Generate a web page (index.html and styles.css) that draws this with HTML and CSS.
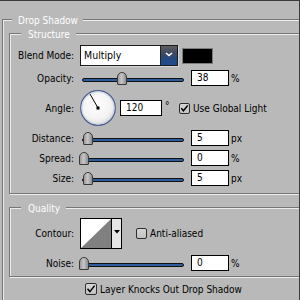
FILE: index.html
```html
<!DOCTYPE html>
<html>
<head>
<meta charset="utf-8">
<link rel="stylesheet" href="styles.css">
</head>
<body>
<div class="dialog">
  <div class="group outer">
    <div class="legend legend-outer">Drop Shadow</div>

    <div class="group structure">
      <div class="legend legend-inner">Structure</div>

      <div class="row row-blend">
        <span class="label">Blend Mode:</span>
        <div class="select">
          <span class="select-text">Multiply</span>
          <span class="select-btn">
            <svg width="8" height="5" viewBox="0 0 8 5"><path d="M1 1 L4 3.5 L7 1" fill="none" stroke="#fff" stroke-width="1.6"/></svg>
          </span>
        </div>
        <span class="swatch"></span>
      </div>

      <div class="row">
        <span class="label">Opacity:</span>
        <div class="slider"><div class="track"></div><div class="thumb" style="left:37px"></div></div>
        <span class="field">38</span><span class="unit">%</span>
      </div>

      <div class="row row-angle">
        <span class="label">Angle:</span>
        <svg class="dial" width="36" height="36" viewBox="0 0 36 36">
          <defs>
            <radialGradient id="dialfill" cx="0.45" cy="0.4" r="0.6">
              <stop offset="0" stop-color="#ffffff"/>
              <stop offset="0.7" stop-color="#f3f3f3"/>
              <stop offset="1" stop-color="#dcdcdc"/>
            </radialGradient>
          </defs>
          <circle cx="18" cy="18" r="17.3" fill="url(#dialfill)" stroke="#4b5f92" stroke-width="1.2"/>
          <circle cx="18" cy="18" r="16" fill="none" stroke="#c9d0e0" stroke-width="0.8"/>
          <line x1="18" y1="18" x2="10" y2="4" stroke="#000" stroke-width="1"/>
          <rect x="16.5" y="16.5" width="3" height="3" fill="#000"/>
        </svg>
        <span class="field field-angle">120</span>
        <span class="deg">°</span>
        <span class="check checked">
          <svg width="9" height="9" viewBox="0 0 9 9"><path d="M1.3 4.3 L3.4 6.8 L7.8 1.4" fill="none" stroke="#000" stroke-width="1.5"/></svg>
        </span>
        <span class="check-label">Use Global Light</span>
      </div>

      <div class="row">
        <span class="label">Distance:</span>
        <div class="slider"><div class="track"></div><div class="thumb" style="left:3px"></div></div>
        <span class="field">5</span><span class="unit">px</span>
      </div>

      <div class="row">
        <span class="label">Spread:</span>
        <div class="slider"><div class="track"></div><div class="thumb" style="left:-1px"></div></div>
        <span class="field">0</span><span class="unit">%</span>
      </div>

      <div class="row">
        <span class="label">Size:</span>
        <div class="slider"><div class="track"></div><div class="thumb" style="left:3px"></div></div>
        <span class="field">5</span><span class="unit">px</span>
      </div>
    </div>

    <div class="group quality">
      <div class="legend legend-inner">Quality</div>

      <div class="row row-contour">
        <span class="label">Contour:</span>
        <div class="contour">
          <svg class="contour-preview" width="30" height="29" viewBox="0 0 30 29">
            <rect width="30" height="29" fill="#fff"/>
            <path d="M0 29 L30 0 L30 29 Z" fill="#808080"/>
          </svg>
          <span class="contour-btn">
            <svg width="6" height="4" viewBox="0 0 6 4"><path d="M0 0 H6 L3 3.5 Z" fill="#000"/></svg>
          </span>
        </div>
        <span class="check check-aa"></span>
        <span class="check-label">Anti-aliased</span>
      </div>

      <div class="row row-noise">
        <span class="label">Noise:</span>
        <div class="slider"><div class="track"></div><div class="thumb" style="left:-1px"></div></div>
        <span class="field">0</span><span class="unit">%</span>
      </div>
    </div>

    <div class="knock">
      <span class="check checked check-knock">
        <svg width="10" height="10" viewBox="0 0 10 10"><path d="M1.5 4.8 L3.9 7.6 L8.6 1.6" fill="none" stroke="#000" stroke-width="1.5"/></svg>
      </span>
      <span class="check-label">Layer Knocks Out Drop Shadow</span>
    </div>
  </div>
</div>
</body>
</html>
```
FILE: styles.css
```css
* { box-sizing: border-box; }

html, body {
  margin: 0;
  padding: 0;
}

body {
  background: #b9b9b9;
  font-family: "DejaVu Sans Condensed", "Liberation Sans", sans-serif;
  font-size: 10px;
  color: #000;
}

.dialog {
  width: 300px;
  height: 300px;
  overflow: hidden;
  background: #b9b9b9;
  border-top: 1px solid #3c3c3c;
  border-right: 1px solid #3c3c3c;
  padding: 18px 0 0 2px;
}

.group {
  display: flex;
  flex-direction: column;
  border: 1px solid #767676;
  box-shadow: inset 1px 1px 0 #ececec, 1px 1px 0 #ececec;
}

.outer {
  margin-right: -40px;
  padding: 0 0 30px 6px;
}

.legend {
  align-self: flex-start;
  height: 12px;
  line-height: 12px;
  margin-top: -5px;
  background: #b9b9b9;
  color: #fff;
  white-space: nowrap;
}

.legend-outer {
  margin-left: 3px;
  padding: 0 5px 0 6px;
}

.legend-inner {
  margin-left: 11px;
  padding: 0 6px 0 7px;
}

.structure {
  margin-top: 6px;
  padding-bottom: 7px;
  gap: 4px;
}

.quality {
  margin-top: 13px;
  padding-bottom: 5px;
}

.row {
  display: flex;
  align-items: center;
  height: 16px;
  white-space: nowrap;
}

.row-blend { height: 21px; }
.row-angle { height: 36px; }
.row-contour { height: 31px; margin-top: 3px; }
.row-noise { margin-top: 6px; }

.label {
  flex: 0 0 65px;
  text-align: right;
  padding-right: 1px;
  margin-right: 5px;
}

/* select */
.select {
  display: flex;
  width: 98px;
  height: 21px;
  border: 1px solid #1a1a1a;
  box-shadow: 1px 1px 0 #d6d6d6;
}

.select-text {
  flex: 1;
  background: #fff;
  padding-left: 3px;
  line-height: 19px;
  font-size: 10.5px;
}

.select-btn {
  width: 17px;
  display: flex;
  align-items: center;
  justify-content: center;
  padding-bottom: 2px;
  border-left: 1px solid #222;
  background: linear-gradient(#5e5e5e 0%, #3f4b5e 35%, #24487e 65%, #1d4c92 100%);
}

.swatch {
  width: 31px;
  height: 16px;
  margin-left: 4px;
  background: #000;
  border: 1px solid #7c7c7c;
}

/* slider */
.slider {
  position: relative;
  width: 105px;
  height: 16px;
}

.track {
  margin: 8px 1px 0 2px;
  height: 4px;
  background: #2d5d9c;
  border: 1px solid #111;
  border-radius: 2px;
}

.thumb {
  position: absolute;
  top: 2px;
  width: 10px;
  height: 13px;
  border: 1px solid #3a3a3a;
  border-radius: 5px 5px 1px 1px;
  background: linear-gradient(90deg, #9a9a9a, #c6c6c6 45%, #8e8e8e);
}

/* fields */
.field {
  width: 38px;
  height: 16px;
  margin-left: 6px;
  padding-left: 5px;
  background: #fff;
  border: 1px solid #000;
  line-height: 14px;
}

.field-angle {
  width: 42px;
  margin-left: 4px;
}

.unit {
  margin-left: 2px;
}

.deg {
  width: 14px;
  margin-left: 3px;
  align-self: flex-start;
  margin-top: 10px;
  line-height: 12px;
}

.dial { display: block; }

/* checkboxes */
.check {
  width: 11px;
  height: 11px;
  border: 1px solid #2e2e2e;
  border-radius: 2px;
  background: linear-gradient(#d6d6d6, #c2c2c2);
  display: flex;
  align-items: center;
  justify-content: center;
  flex-shrink: 0;
}

.check-label {
  margin-left: 3px;
}

.check-aa {
  margin-left: 14px;
}

/* contour */
.contour {
  display: flex;
  width: 42px;
  height: 31px;
  border: 1px solid #000;
}

.contour-preview { display: block; }

.contour-btn {
  flex: 1;
  border-left: 1px solid #000;
  background: #e6e6e6;
  display: flex;
  justify-content: center;
  align-items: flex-start;
  padding-top: 11px;
}

.contour-btn svg { display: block; }

/* knock row */
.knock {
  display: flex;
  align-items: center;
  height: 12px;
  margin-top: 6px;
  margin-left: 76px;
  white-space: nowrap;
}

.check-knock {
  width: 12px;
  height: 12px;
}
```
